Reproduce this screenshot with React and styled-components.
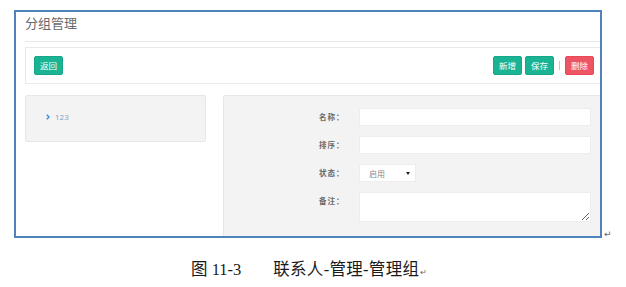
import React from "react";
import styled, { createGlobalStyle } from "styled-components";

const Global = createGlobalStyle`
  html, body { margin: 0; padding: 0; background: #fff; }
  body { width: 626px; height: 287px; overflow: hidden; font-family: "Open Sans", "Noto Sans CJK SC", sans-serif; }
`;

const Page = styled.div`
  padding: 10px 0 0 14px;
`;

const FrameRow = styled.div`
  display: flex;
  align-items: flex-end;
`;

const Frame = styled.div`
  width: 575px;
  height: 224px;
  border: 2px solid #4f81bd;
  overflow: hidden;
  padding-left: 9px;
`;

const Mark = styled.span`
  font-family: "DejaVu Sans", sans-serif;
  font-size: 9px;
  color: #666;
  margin: 0 0 -1px 2px;
  line-height: 10px;
`;

const Content = styled.div`
  width: 582px;
`;

const Header = styled.div`
  height: 27px;
  padding-top: 2px;
  border-bottom: 1px solid #e7eaec;
`;

const Title = styled.h2`
  margin: 0;
  font-family: "Noto Sans CJK SC", sans-serif;
  font-weight: 400;
  font-size: 13px;
  line-height: 18px;
  color: #676a6c;
`;

const Toolbar = styled.div`
  margin-top: 5px;
  height: 35px;
  border: 1px solid #e7eaec;
  display: flex;
  align-items: center;
  padding: 0 12px 0 8px;
`;

const Spacer = styled.div`
  flex: 1;
`;

const Btn = styled.button`
  height: 19px;
  width: 29px;
  padding: 0;
  margin-left: ${(p) => (p.$first ? 0 : 3)}px;
  border: 1px solid ${(p) => (p.$danger ? "#ec4758" : "#18a689")};
  border-radius: 2px;
  background: ${(p) => (p.$danger ? "#ed5565" : "#1ab394")};
  color: #fff;
  font-family: "Noto Sans CJK SC", sans-serif;
  font-size: 8.5px;
  line-height: 17px;
`;

const Divider = styled.span`
  width: 1px;
  height: 9px;
  background: #c8c8c8;
  margin: 0 5px 0 5px;
`;

const Body = styled.div`
  display: flex;
  gap: 17px;
  margin-top: 11px;
  align-items: flex-start;
`;

const TreePanel = styled.div`
  width: 181px;
  height: 47px;
  background: #f3f3f4;
  border: 1px solid #e7e7e7;
  border-radius: 2px;
  padding: 16px 0 0 20px;
  box-sizing: border-box;
  display: flex;
  align-items: flex-start;
  gap: 5px;
`;

const NodeText = styled.span`
  font-family: "Open Sans", sans-serif;
  font-size: 8px;
  line-height: 10px;
  color: #7b9cc8;
`;

const FormPanel = styled.div`
  flex: 1;
  height: 160px;
  background: #f3f3f4;
  border: 1px solid #e7e7e7;
  border-radius: 2px 0 0 0;
  padding: 12px 0 0 95px;
  display: grid;
  grid-template-columns: 40px 232px;
  row-gap: 10px;
  align-content: start;
`;

const Label = styled.label`
  font-family: "Noto Sans CJK SC", sans-serif;
  font-size: 7.5px;
  font-weight: 700;
  line-height: 18px;
  letter-spacing: 1px;
  color: #676a6c;
`;

const Input = styled.input`
  height: 18px;
  box-sizing: border-box;
  border: 1px solid #ededed;
  background: #fff;
  margin: 0;
  padding: 0 6px;
  outline: none;
`;

const SelectBox = styled.div`
  width: 57px;
  height: 18px;
  box-sizing: border-box;
  border: 1px solid #ededed;
  background: #fff;
  display: flex;
  align-items: center;
  justify-content: space-between;
  padding: 0 5px 0 9px;
  font-family: "Noto Sans CJK SC", sans-serif;
  font-size: 8px;
  color: #888;
`;

const Caret = styled.span`
  width: 0;
  height: 0;
  border-left: 2px solid transparent;
  border-right: 2px solid transparent;
  border-top: 3px solid #222;
`;

const TextArea = styled.textarea`
  height: 30px;
  box-sizing: border-box;
  border: 1px solid #ededed;
  background: #fff;
  margin: 0;
  padding: 0;
  resize: both;
  outline: none;
`;

const Caption = styled.div`
  margin-top: 21px;
  padding-left: 177px;
  font-family: "Liberation Serif", "Noto Sans CJK SC", serif;
  font-size: 16.5px;
  line-height: 22px;
  color: #1a1a1a;
  display: flex;
  align-items: baseline;
`;

const CapNum = styled.span`
  white-space: pre;
`;

const CapText = styled.span`
  margin-left: 32px;
  letter-spacing: 0.3px;
`;

const CapMark = styled.span`
  font-family: "DejaVu Sans", sans-serif;
  font-size: 8px;
  color: #666;
  margin-left: 1px;
`;

function Chevron() {
  return (
    <svg width="4" height="6" viewBox="0 0 4 6" style={{ marginTop: 2 }}>
      <path d="M0.8 0.6 L3 3 L0.8 5.4" fill="none" stroke="#2f8ee5" strokeWidth="1.4" />
    </svg>
  );
}

export default function App() {
  return (
    <>
      <Global />
      <Page>
        <FrameRow>
          <Frame>
            <Content>
              <Header>
                <Title>分组管理</Title>
              </Header>
              <Toolbar>
                <Btn $first>返回</Btn>
                <Spacer />
                <Btn>新增</Btn>
                <Btn>保存</Btn>
                <Divider />
                <Btn $danger $first>删除</Btn>
              </Toolbar>
              <Body>
                <TreePanel>
                  <Chevron />
                  <NodeText>123</NodeText>
                </TreePanel>
                <FormPanel>
                  <Label>名称：</Label>
                  <Input />
                  <Label>排序：</Label>
                  <Input />
                  <Label>状态：</Label>
                  <SelectBox>
                    <span>启用</span>
                    <Caret />
                  </SelectBox>
                  <Label>备注：</Label>
                  <TextArea />
                </FormPanel>
              </Body>
            </Content>
          </Frame>
          <Mark>↵</Mark>
        </FrameRow>
        <Caption>
          <CapNum>图 11-3</CapNum>
          <CapText>联系人-管理-管理组</CapText>
          <CapMark>↵</CapMark>
        </Caption>
      </Page>
    </>
  );
}
